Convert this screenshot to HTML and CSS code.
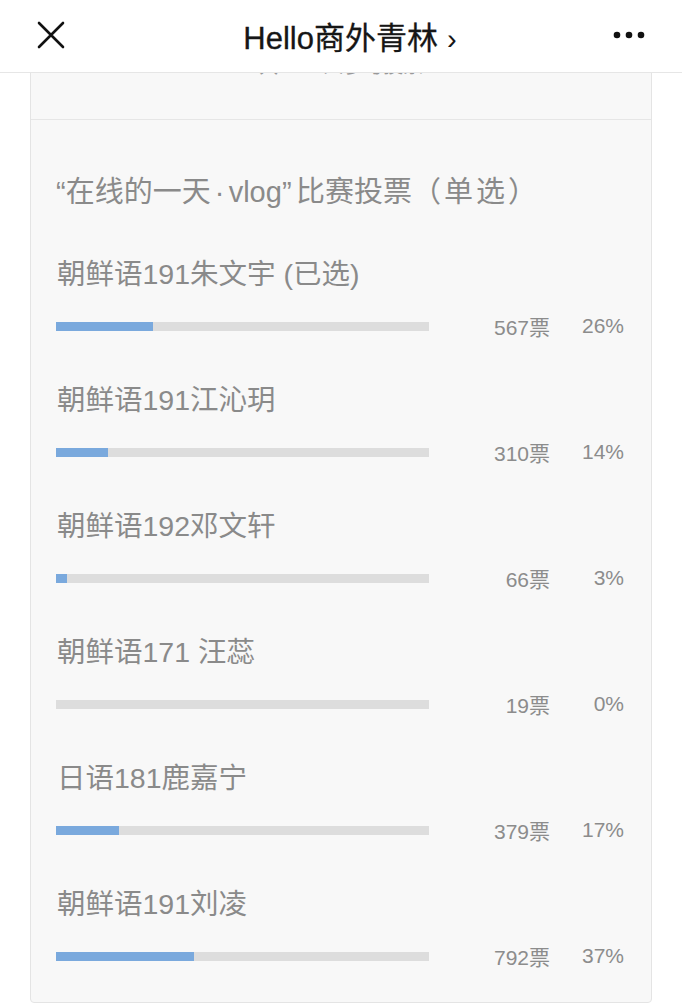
FILE: index.html
```html
<!DOCTYPE html>
<html lang="zh-CN">
<head>
    <meta charset="UTF-8">
    <title>Hello商外青林</title>
    <link rel="stylesheet" href="styles.css">
</head>
<body>
    <header class="topbar">
        <span class="topbar-close">
            <svg width="28" height="28" viewBox="0 0 28 28">
                <path d="M2 2 L26 26 M26 2 L2 26" stroke="#111" stroke-width="2.6" stroke-linecap="round" fill="none"/>
            </svg>
        </span>
        <h1 class="topbar-title">Hello商外青林<span class="chevron">›</span></h1>
        <span class="topbar-more">
            <svg width="34" height="8" viewBox="0 0 34 8">
                <circle cx="4" cy="4" r="3.3" fill="#111"/>
                <circle cx="16" cy="4" r="3.3" fill="#111"/>
                <circle cx="28" cy="4" r="3.3" fill="#111"/>
            </svg>
        </span>
    </header>

    <main class="page">
        <section class="vote-card">
            <div class="vote-head">共2133人参与投票</div>

            <div class="vote-body">
                <h2 class="vote-title">“在线的一天<span class="mid-dot">·</span>vlog<span class="close-quote">”</span>比赛投票<span class="paren">（单选）</span></h2>

                <div class="option">
                    <div class="option-name">朝鲜语191朱文宇 (已选)</div>
                    <div class="option-row">
                        <div class="bar"><div class="bar-fill" style="width: 26%"></div></div>
                        <span class="count">567票</span>
                        <span class="percent">26%</span>
                    </div>
                </div>

                <div class="option">
                    <div class="option-name">朝鲜语191江沁玥</div>
                    <div class="option-row">
                        <div class="bar"><div class="bar-fill" style="width: 14%"></div></div>
                        <span class="count">310票</span>
                        <span class="percent">14%</span>
                    </div>
                </div>

                <div class="option">
                    <div class="option-name">朝鲜语192邓文轩</div>
                    <div class="option-row">
                        <div class="bar"><div class="bar-fill" style="width: 3%"></div></div>
                        <span class="count">66票</span>
                        <span class="percent">3%</span>
                    </div>
                </div>

                <div class="option">
                    <div class="option-name">朝鲜语171 汪蕊</div>
                    <div class="option-row">
                        <div class="bar"><div class="bar-fill" style="width: 0%"></div></div>
                        <span class="count">19票</span>
                        <span class="percent">0%</span>
                    </div>
                </div>

                <div class="option">
                    <div class="option-name">日语181鹿嘉宁</div>
                    <div class="option-row">
                        <div class="bar"><div class="bar-fill" style="width: 17%"></div></div>
                        <span class="count">379票</span>
                        <span class="percent">17%</span>
                    </div>
                </div>

                <div class="option">
                    <div class="option-name">朝鲜语191刘凌</div>
                    <div class="option-row">
                        <div class="bar"><div class="bar-fill" style="width: 37%"></div></div>
                        <span class="count">792票</span>
                        <span class="percent">37%</span>
                    </div>
                </div>
            </div>
        </section>
    </main>
</body>
</html>
```

FILE: styles.css
```css
* {
    box-sizing: border-box;
}

body {
    margin: 0;
    background: #fff;
    font-family: "Liberation Sans", "Noto Sans CJK SC", sans-serif;
}

/* Top navigation bar, stays over the scrolled content */
.topbar {
    position: fixed;
    z-index: 10;
    left: 0; top: 0;
    width: 100%;
    height: 73px;
    display: flex;
    align-items: center;
    justify-content: space-between;
    padding: 0 35px 2px 37px;
    background: #fff;
    border-bottom: 1px solid #e6e6e6;
}

.topbar-close,
.topbar-more {
    display: flex;
    align-items: center;
}

.topbar-title {
    margin: 0 0 0 22px;
    font-size: 31px;
    font-weight: normal;
    color: #161616;
    -webkit-text-stroke: 0.3px #161616;
}

.chevron {
    margin-left: 9px;
    font-size: 29px;
    -webkit-text-stroke: 0;
}

.page {
    padding: 30px 30px 0;
}

/* Vote card */
.vote-card {
    background: #f8f8f8;
    border: 1px solid #e4e4e4;
    border-radius: 4px;
}

.vote-head {
    padding: 20px 0 38px;
    line-height: 30px;
    font-size: 20px;
    color: #999;
    text-align: center;
    border-bottom: 1px solid #e6e6e6;
}

.vote-body {
    padding: 52px 27px 34px 25px;
}

.vote-title {
    margin: 0 0 42px;
    line-height: 40px;
    font-size: 29px;
    font-weight: normal;
    color: #8a8a8a;
}

.mid-dot {
    display: inline-block;
    width: 18px;
    text-align: center;
}

.close-quote {
    display: inline-block;
    width: 14px;
}

.paren {
    letter-spacing: 3px;
}

.option-name {
    padding-left: 1px;
    line-height: 40px;
    font-size: 28.5px;
    color: #8a8a8a;
}

.option + .option {
    margin-top: 42px;
}

.option-row {
    display: flex;
    align-items: center;
    height: 24px;
    margin-top: 20px;
}

.bar {
    width: 373px;
    height: 9px;
    background: #dddddd;
}

.bar-fill {
    height: 100%;
    background: #7aa9dd;
}

.count,
.percent {
    font-size: 21px;
    color: #8c8c8c;
    text-align: right;
}

.count {
    width: 121px;
}

.percent {
    width: 74px;
}
```
